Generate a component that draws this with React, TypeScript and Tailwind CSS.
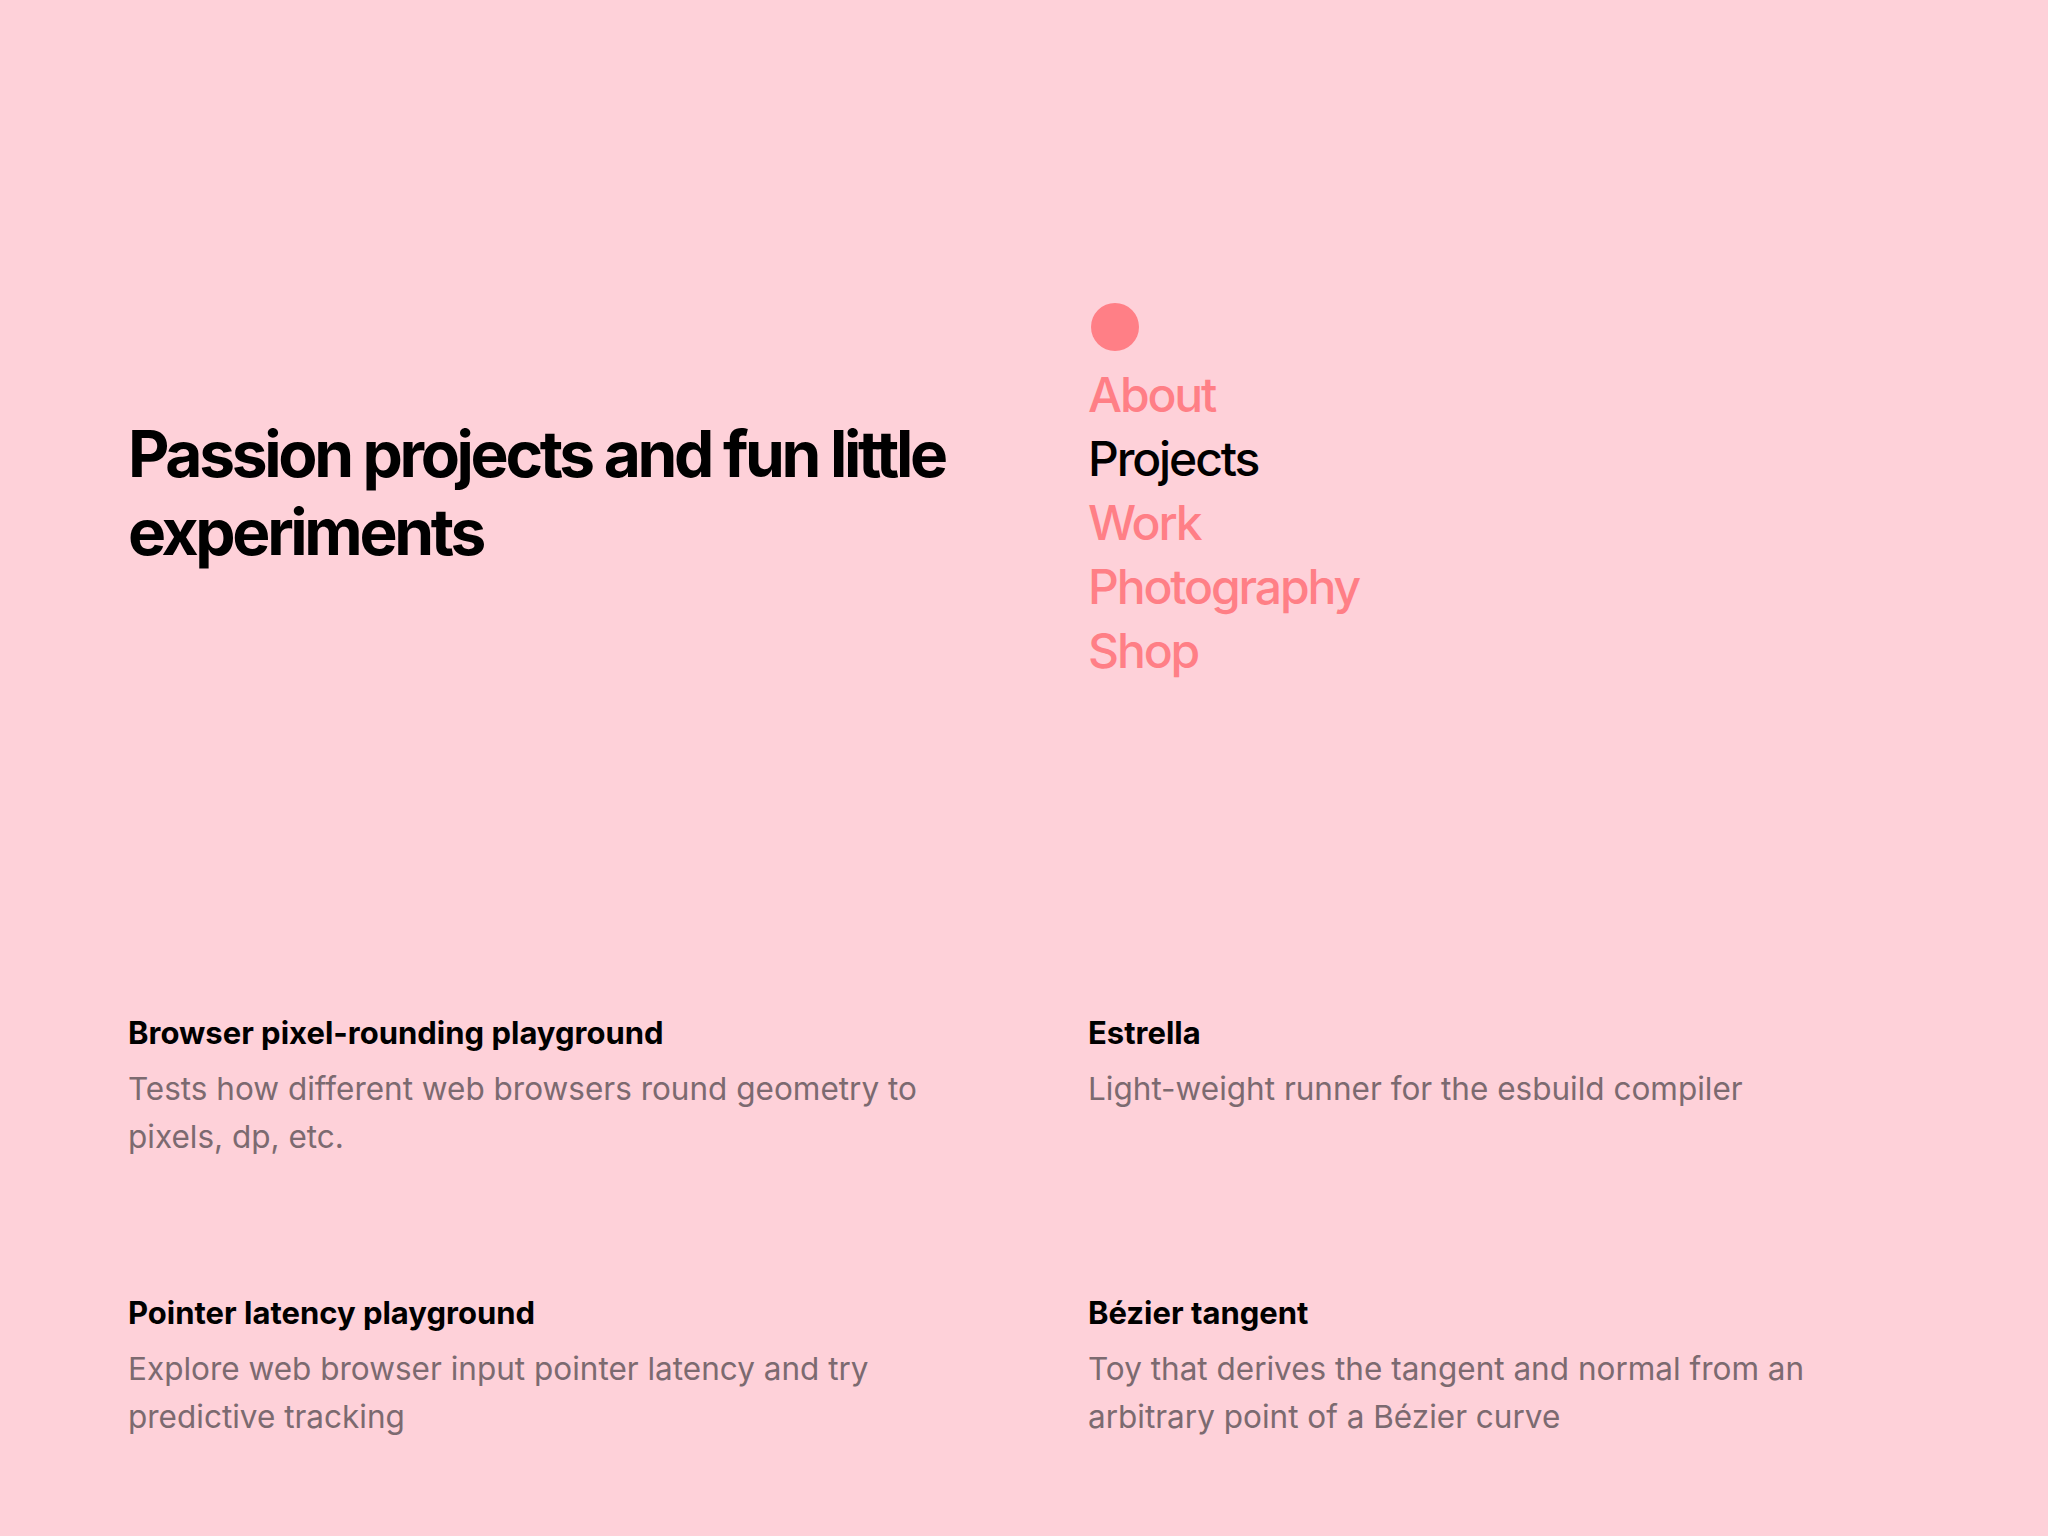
const navItems = [
  { label: "About", active: false },
  { label: "Projects", active: true },
  { label: "Work", active: false },
  { label: "Photography", active: false },
  { label: "Shop", active: false },
];

const projects = [
  {
    title: "Browser pixel-rounding playground",
    description: "Tests how different web browsers round geometry to pixels, dp, etc.",
  },
  {
    title: "Estrella",
    description: "Light-weight runner for the esbuild compiler",
  },
  {
    title: "Pointer latency playground",
    description: "Explore web browser input pointer latency and try predictive tracking",
  },
  {
    title: "Bézier tangent",
    description: "Toy that derives the tangent and normal from an arbitrary point of a Bézier curve",
  },
];

export default function App() {
  return (
    <div className="min-h-screen bg-[#fed1d9] px-32 pb-24 font-['Inter',sans-serif] text-black antialiased">
      <header className="grid grid-cols-2 items-center gap-x-32 pt-[303px]">
        <h1 className="text-[64px] font-bold leading-[78px] tracking-[-0.052em]">
          Passion projects and fun little experiments
        </h1>
        <nav className="flex flex-col items-start">
          <span className="mb-3 ml-[3px] h-12 w-12 rounded-full bg-[#ff7f86]" aria-hidden="true" />
          {navItems.map((item) => (
            <a
              key={item.label}
              href="#"
              className={
                item.active
                  ? "text-[48px] font-medium leading-[64px] tracking-[-0.044em] text-black"
                  : "text-[48px] font-medium leading-[64px] tracking-[-0.044em] text-[#ff7f86]"
              }
            >
              {item.label}
            </a>
          ))}
        </nav>
      </header>

      <section className="mt-[330px] grid grid-cols-2 gap-x-32 gap-y-[132px]">
        {projects.map((project) => (
          <article key={project.title}>
            <h2 className="text-[31px] font-bold leading-10">{project.title}</h2>
            <p className="mt-3 max-w-[800px] text-[31.5px] leading-[48px] text-[#7c6a70]">{project.description}</p>
          </article>
        ))}
      </section>
    </div>
  );
}
